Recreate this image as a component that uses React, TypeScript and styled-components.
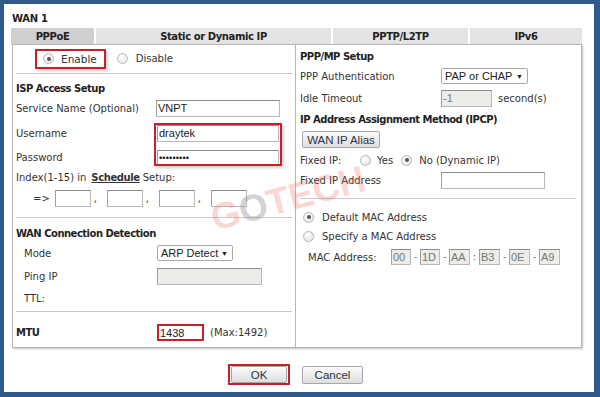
import styled, { createGlobalStyle } from 'styled-components';

const Global = createGlobalStyle`
  html, body { margin: 0; padding: 0; background: #fff; }
  body { font-family: "DejaVu Sans", Verdana, sans-serif; font-size: 10px; color: #333; }
`;

const Frame = styled.div`
  position: relative;
  width: 600px;
  height: 397px;
  box-sizing: border-box;
  border-style: solid;
  border-color: #2f5b8c;
  border-width: 4px 6px 5px 4px;
  background: #fff;
  padding-left: 7px;
  display: flex;
  flex-direction: column;
  overflow: hidden;
`;

const Title = styled.div`
  padding: 8px 0 0 1px;
  height: 14px;
  line-height: 14px;
  font-weight: bold;
  font-size: 10px;
  letter-spacing: -0.3px;
  color: #222;
`;

const Tabs = styled.div`
  margin-top: 2px;
  display: flex;
  gap: 2px;
  height: 16px;
`;

const Tab = styled.div<{ $w: number; $active?: boolean }>`
  width: ${(p) => p.$w}px;
  background: ${(p) => (p.$active ? '#cfcfcf' : '#e4e4e4')};
  font-weight: bold;
  letter-spacing: -0.4px;
  color: #222;
  display: flex;
  align-items: center;
  justify-content: center;
`;

const Panel = styled.div`
  margin-left: 1px;
  width: 570px;
  height: 304px;
  box-sizing: border-box;
  border: 1px solid #b5b5b5;
  box-shadow: 1px 1px 2px rgba(0, 0, 0, 0.25);
  display: grid;
  grid-template-columns: 283px 1fr;
`;

const Col = styled.div<{ $left?: boolean }>`
  position: relative;
  display: flex;
  flex-direction: column;
  border-right: ${(p) => (p.$left ? '1px solid #b5b5b5' : 'none')};
  padding-left: ${(p) => (p.$left ? 3 : 4)}px;
`;

const Row = styled.div<{ $h: number; $mt?: number; $indent?: number }>`
  height: ${(p) => p.$h}px;
  margin-top: ${(p) => p.$mt ?? 0}px;
  padding-left: ${(p) => p.$indent ?? 0}px;
  display: flex;
  align-items: center;
  white-space: nowrap;
`;

const Label = styled.span<{ $w?: number }>`
  width: ${(p) => (p.$w ? `${p.$w}px` : 'auto')};
  flex-shrink: 0;
`;

const Heading = styled.span`
  font-weight: bold;
  letter-spacing: -0.5px;
  color: #222;
`;

const Rule = styled.div<{ $mt?: number; $mr?: number }>`
  margin-top: ${(p) => p.$mt ?? 0}px;
  margin-right: ${(p) => p.$mr ?? 3}px;
  height: 0;
  border-top: 1px solid #c9c9c9;
`;

const Radio = styled.span<{ $on?: boolean }>`
  position: relative;
  width: 9px;
  height: 9px;
  border-radius: 50%;
  border: 1px solid #b8b8b8;
  background: radial-gradient(circle at 40% 35%, #fff 0%, #e2e2e2 90%);
  flex-shrink: 0;
  &::after {
    content: '';
    display: ${(p) => (p.$on ? 'block' : 'none')};
    position: absolute;
    left: 2.5px;
    top: 2.5px;
    width: 4px;
    height: 4px;
    border-radius: 50%;
    background: #555;
  }
`;

const RadioText = styled.span<{ $gap?: number }>`
  margin-left: ${(p) => p.$gap ?? 8}px;
`;

const EnableBox = styled.span`
  margin-left: 19px;
  height: 20px;
  box-sizing: border-box;
  display: inline-flex;
  align-items: center;
  padding: 0 7px 0 6px;
  border: 2px solid #c71f2c;
  box-shadow: 2px 2px 3px rgba(0, 0, 0, 0.2);
  font-size: 10.5px;
`;

const Input = styled.div<{ $w: number; $h?: number; $disabled?: boolean; $red?: boolean }>`
  width: ${(p) => p.$w}px;
  height: ${(p) => p.$h ?? 17}px;
  box-sizing: border-box;
  border: ${(p) => (p.$red ? '2px solid #c71f2c' : '1px solid #b9b9b9')};
  border-top-color: ${(p) => (p.$red ? '#c71f2c' : '#8d8d8d')};
  border-left-color: ${(p) => (p.$red ? '#c71f2c' : '#a0a0a0')};
  background: ${(p) => (p.$disabled ? '#ecece8' : '#fff')};
  color: ${(p) => (p.$disabled ? '#777' : '#222')};
  font-family: "Liberation Sans", Arial, sans-serif;
  font-size: 11px;
  line-height: 14px;
  padding-left: 1px;
  flex-shrink: 0;
  overflow: hidden;
`;

const Dots = styled.span`
  font-size: 9px;
  letter-spacing: 0.2px;
  color: #111;
`;

const Select = styled.div<{ $w: number }>`
  width: ${(p) => p.$w}px;
  height: 16px;
  box-sizing: border-box;
  border: 1px solid #a9a9a9;
  border-radius: 2px;
  background: #fff;
  font-family: "Liberation Sans", Arial, sans-serif;
  font-size: 11px;
  display: flex;
  align-items: center;
  justify-content: space-between;
  padding: 0 4px 0 3px;
  color: #222;
  &::after {
    content: '▼';
    font-size: 7px;
  }
`;

const Comma = styled.span`
  width: 16px;
  padding-left: 3px;
  box-sizing: border-box;
`;

const Sep = styled.span`
  width: 9px;
  text-align: center;
  font-size: 9px;
  color: #555;
`;

const Underlined = styled.span`
  font-weight: bold;
  text-decoration: underline;
  letter-spacing: -0.4px;
  margin: 0 3px 0 5px;
`;

const Button = styled.div<{ $w: number; $h?: number }>`
  width: ${(p) => p.$w}px;
  height: ${(p) => p.$h ?? 17}px;
  box-sizing: border-box;
  border: 1px solid #a8a8a8;
  border-radius: 2px;
  background: linear-gradient(#fbfbfb, #dedede);
  display: flex;
  align-items: center;
  justify-content: center;
  font-family: "Liberation Sans", Arial, sans-serif;
  font-size: 11.5px;
  color: #2d3445;
`;

const CredentialsMark = styled.div`
  position: absolute;
  left: 141px;
  top: 78px;
  width: 128px;
  height: 43px;
  box-sizing: border-box;
  border: 2px solid #c71f2c;
  box-shadow: 2px 2px 3px rgba(0, 0, 0, 0.2);
  pointer-events: none;
`;

const Footer = styled.div`
  margin-top: 16px;
  padding-left: 217px;
  display: flex;
  align-items: center;
  gap: 12px;
`;

const OkMark = styled.div`
  width: 62px;
  height: 21px;
  box-sizing: border-box;
  border: 2px solid #c71f2c;
  display: flex;
  align-items: center;
  justify-content: center;
`;

const Watermark = styled.div`
  position: absolute;
  left: 211px;
  top: 196px;
  font-family: "Liberation Sans", Arial, sans-serif;
  font-weight: bold;
  font-size: 37px;
  line-height: 37px;
  color: rgba(240, 115, 95, 0.3);
  transform: rotate(-15deg);
  transform-origin: 0 31px;
  pointer-events: none;
  white-space: nowrap;
`;

const LogoO = styled.span`
  color: rgba(140, 140, 140, 0.4);
`;

export default function App() {
  return (
    <>
      <Global />
      <Frame>
        <Title>WAN 1</Title>
        <Tabs>
          <Tab $w={83} $active>PPPoE</Tab>
          <Tab $w={235}>Static or Dynamic IP</Tab>
          <Tab $w={135}>PPTP/L2TP</Tab>
          <Tab $w={112}>IPv6</Tab>
        </Tabs>
        <Panel>
          <Col $left>
            <Row $h={27} $mt={0}>
              <EnableBox>
                <Radio $on />
                <RadioText $gap={7}>Enable</RadioText>
              </EnableBox>
              <Radio style={{ marginLeft: 11 }} />
              <RadioText>Disable</RadioText>
            </Row>
            <Rule $mt={1} />
            <Row $h={20} $mt={4}>
              <Heading>ISP Access Setup</Heading>
            </Row>
            <Row $h={20}>
              <Label $w={140}>Service Name (Optional)</Label>
              <Input $w={124}>VNPT</Input>
            </Row>
            <Row $h={30}>
              <Label $w={141}>Username</Label>
              <Input $w={122}>draytek</Input>
            </Row>
            <Row $h={18}>
              <Label $w={141}>Password</Label>
              <Input $w={122} $h={15} style={{ lineHeight: '12px' }}>
                <Dots>•••••••••</Dots>
              </Input>
            </Row>
            <Row $h={22}>
              Index(1-15) in<Underlined>Schedule</Underlined>Setup:
            </Row>
            <Row $h={20} $indent={17}>
              <Label style={{ marginRight: 5 }}>=&gt;</Label>
              <Input $w={36} />
              <Comma>,</Comma>
              <Input $w={36} />
              <Comma>,</Comma>
              <Input $w={36} />
              <Comma>,</Comma>
              <Input $w={36} />
            </Row>
            <Rule $mt={9} />
            <Row $h={20} $mt={5}>
              <Heading>WAN Connection Detection</Heading>
            </Row>
            <Row $h={20} $indent={8}>
              <Label $w={133}>Mode</Label>
              <Select $w={76}>ARP Detect</Select>
            </Row>
            <Row $h={26} $indent={8}>
              <Label $w={133}>Ping IP</Label>
              <Input $w={105} $disabled />
            </Row>
            <Row $h={18} $indent={8}>
              <Label>TTL:</Label>
            </Row>
            <Rule $mt={4} />
            <Row $h={20} $mt={10}>
              <Label $w={141}>
                <Heading>MTU</Heading>
              </Label>
              <Input $w={47} $red>
                1438
              </Input>
              <Label style={{ marginLeft: 6 }}>(Max:1492)</Label>
            </Row>
            <CredentialsMark />
          </Col>
          <Col>
            <Row $h={18} $mt={2}>
              <Heading>PPP/MP Setup</Heading>
            </Row>
            <Row $h={22}>
              <Label $w={141}>PPP Authentication</Label>
              <Select $w={87}>PAP or CHAP</Select>
            </Row>
            <Row $h={22}>
              <Label $w={141}>Idle Timeout</Label>
              <Input $w={51} $disabled>
                -1
              </Input>
              <Label style={{ marginLeft: 6 }}>second(s)</Label>
            </Row>
            <Row $h={20}>
              <Heading>IP Address Assignment Method (IPCP)</Heading>
            </Row>
            <Row $h={21} $indent={2}>
              <Button $w={78} $h={17}>
                WAN IP Alias
              </Button>
            </Row>
            <Row $h={20}>
              <Label $w={60}>Fixed IP:</Label>
              <Radio />
              <RadioText $gap={6}>Yes</RadioText>
              <Radio $on style={{ marginLeft: 8 }} />
              <RadioText $gap={7}>No (Dynamic IP)</RadioText>
            </Row>
            <Row $h={20}>
              <Label $w={141}>Fixed IP Address</Label>
              <Input $w={104} />
            </Row>
            <Rule $mt={8} $mr={5} />
            <Row $h={20} $mt={8} $indent={3}>
              <Radio $on />
              <RadioText $gap={8}>Default MAC Address</RadioText>
            </Row>
            <Row $h={19} $indent={3}>
              <Radio />
              <RadioText $gap={8}>Specify a MAC Address</RadioText>
            </Row>
            <Row $h={22} $indent={8}>
              <Label $w={83}>MAC Address:</Label>
              <Input $w={20} $h={16} $disabled>00</Input>
              <Sep>-</Sep>
              <Input $w={20} $h={16} $disabled>1D</Input>
              <Sep>-</Sep>
              <Input $w={21} $h={16} $disabled>AA</Input>
              <Sep>:</Sep>
              <Input $w={21} $h={16} $disabled>B3</Input>
              <Sep>-</Sep>
              <Input $w={21} $h={16} $disabled>0E</Input>
              <Sep>-</Sep>
              <Input $w={21} $h={16} $disabled>A9</Input>
            </Row>
          </Col>
        </Panel>
        <Footer>
          <OkMark>
            <Button $w={56} $h={17}>
              OK
            </Button>
          </OkMark>
          <Button $w={61} $h={18}>
            Cancel
          </Button>
        </Footer>
        <Watermark>
          G<LogoO>O</LogoO>TECH
        </Watermark>
      </Frame>
    </>
  );
}
